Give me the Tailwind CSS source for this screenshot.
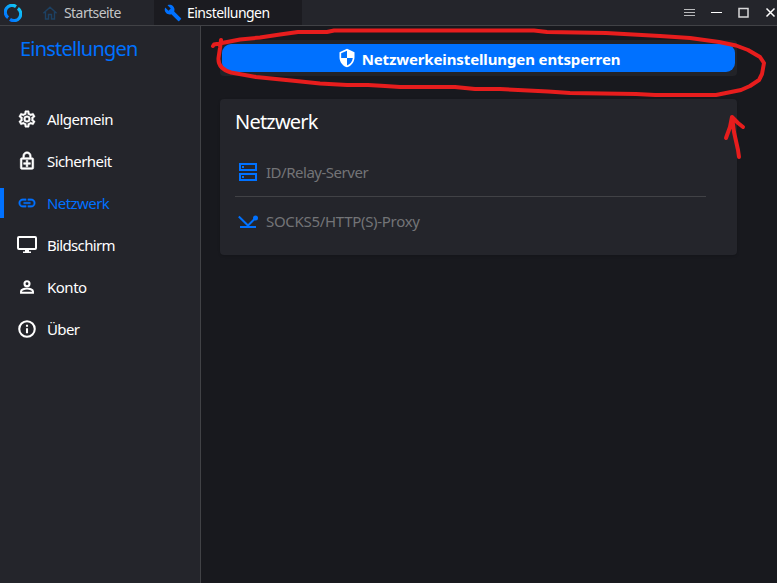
<!DOCTYPE html>
<html lang="de">
<head>
<meta charset="utf-8">
<title>Einstellungen</title>
<script src="https://cdn.jsdelivr.net/npm/@tailwindcss/browser@4"></script>
</head>
<body class="relative flex h-[583px] w-[777px] flex-col overflow-hidden bg-[#18191e] font-['Noto_Sans','Open_Sans',sans-serif] text-[15px] text-white">
  <header class="flex h-[26px] shrink-0 items-center border-b border-[#414246] bg-[#24252b]">
    <svg class="ml-1 h-[18px] w-[18px] shrink-0" viewBox="0 0 18 18" fill="none" stroke-width="3.200">
      <defs><linearGradient id="logo" x1="0" y1="1" x2="1" y2="0"><stop offset="0" stop-color="#0071ff"/><stop offset="1" stop-color="#12c9f5"/></linearGradient></defs>
      <path d="M4.100 13.600A6.600 6.600 0 0 1 12 2.600" stroke="url(#logo)"/>
      <path d="M13.900 4.400A6.600 6.600 0 0 1 6 15.400" stroke="url(#logo)"/>
    </svg>
    <div class="flex h-full w-[132px] items-center pl-[20px]">
      <svg class="h-4 w-4 shrink-0" viewBox="0 0 16 16" fill="none" stroke="#1d4163" stroke-width="1.4"><path d="M1.4 8.2 8 2.2l6.6 6M3.5 7v7h3V9.5h3V14h3V7"/></svg>
      <span class="ml-[6px] text-[14px] tracking-[-0.57px] text-[#c3c4c6]">Startseite</span>
    </div>
    <div class="flex h-full w-[148px] items-center bg-[#1b1b20] pl-[10px]">
      <svg class="h-[18px] w-[18px] shrink-0" viewBox="0 0 24 24" fill="#0071ff"><path d="M22.7 19l-9.1-9.1c.9-2.3.4-5-1.5-6.9-2-2-5-2.4-7.4-1.3L9 6 6 9 1.6 4.7C.4 7.1.9 10.1 2.900 12.100c1.900 1.900 4.600 2.400 6.900 1.500l9.100 9.100c.4.4 1 .4 1.400 0l2.300-2.300c.5-.4.5-1.100.1-1.400z"/></svg>
      <span class="ml-[5px] text-[14px] tracking-[-0.52px]">Einstellungen</span>
    </div>
    <div class="ml-auto flex h-full items-center">
      <svg class="h-[26px] w-[96px]" viewBox="681 0 96 26" fill="none">
        <path d="M684 9.500h11M684 12.500h11M684 15.500h11" stroke="#b9babc"/>
        <path d="M711 12.500h11" stroke="#fff"/>
        <path d="M739 8.500h9v8.500h-9z" stroke="#d8d8d9" stroke-width="1.500"/>
        <path d="M766.500 8.500l8 8M774.500 8.500l-8 8" stroke="#fff" stroke-width="1.500"/>
      </svg>
    </div>
  </header>

  <div class="flex min-h-0 flex-1">
    <aside class="flex w-[201px] shrink-0 flex-col border-r border-[#414246] bg-[#24252b]">
      <h1 class="h-[72px] pt-[8px] pl-[20px] text-[20px] leading-[30px] tracking-[-0.78px] text-[#0071ff]">Einstellungen</h1>
      <nav class="flex flex-col tracking-[-0.5px]">
        <a class="flex h-[42px] items-center pl-[17px]">
          <svg class="h-5 w-5" viewBox="0 0 24 24" fill="#fff"><path d="M19.43 12.98c.04-.32.07-.64.07-.98s-.03-.66-.07-.98l2.11-1.65c.19-.15.24-.42.12-.64l-2-3.460c-.12-.22-.39-.3-.61-.22l-2.490 1c-.52-.4-1.080-.73-1.690-.98l-.38-2.650C14.460 2.180 14.250 2 14 2h-4c-.25 0-.46.18-.49.42l-.38 2.650c-.61.25-1.170.59-1.690.98l-2.490-1c-.23-.09-.49 0-.61.22l-2 3.460c-.13.22-.07.49.12.64l2.110 1.650c-.04.32-.07.65-.07.98s.03.66.07.98l-2.110 1.650c-.19.15-.24.42-.12.64l2 3.460c.12.22.39.3.61.22l2.490-1c.52.4 1.080.73 1.690.98l.38 2.650c.03.24.24.42.49.42h4c.25 0 .46-.18.49-.42l.38-2.650c.61-.25 1.170-.59 1.690-.98l2.490 1c.23.09.49 0 .61-.22l2-3.460c.12-.22.07-.49-.12-.64l-2.110-1.650zM17.450 11.270c.04.31.05.52.05.73s-.02.43-.05.73l-.14 1.130.89.7 1.080.84-.7 1.210-1.270-.51-1.040-.42-.9.680c-.43.32-.84.56-1.250.73l-1.060.43-.16 1.130-.2 1.350h-1.400l-.19-1.350-.16-1.130-1.060-.43c-.43-.18-.83-.41-1.230-.71l-.91-.7-1.060.43-1.270.51-.7-1.210 1.080-.84.89-.7-.14-1.130c-.03-.31-.05-.54-.05-.74s.02-.43.05-.73l.14-1.130-.89-.7-1.080-.84.7-1.210 1.270.51 1.040.42.9-.68c.43-.32.84-.56 1.250-.73l1.060-.43.16-1.130.2-1.350h1.390l.19 1.350.16 1.130 1.060.43c.43.18.83.41 1.230.71l.91.7 1.060-.43 1.270-.51.7 1.210-1.070.85-.89.7.14 1.130zM12 8a4 4 0 1 0 0 8 4 4 0 0 0 0-8zm0 6a2 2 0 1 1 0-4 2 2 0 0 1 0 4z" stroke="#fff" stroke-width=".5"/></svg>
          <span class="ml-[10px]">Allgemein</span>
        </a>
        <a class="flex h-[42px] items-center pl-[17px]">
          <svg class="h-5 w-5" viewBox="0 0 24 24" fill="#fff"><path d="M18 8h-1V6A5 5 0 0 0 7 6v2H6a2 2 0 0 0-2 2v10c0 1.100.9 2 2 2h12a2 2 0 0 0 2-2V10a2 2 0 0 0-2-2zM8.900 6a3.100 3.100 0 0 1 6.200 0v2H8.900V6zM18 20H6V10h12v10zm-7-1h2v-3h3v-2h-3v-3h-2v3H8v2h3z" stroke="#fff" stroke-width=".7"/></svg>
          <span class="ml-[10px] tracking-[-0.57px]">Sicherheit</span>
        </a>
        <a class="relative flex h-[42px] items-center pl-[17px] text-[#0071ff]">
          <span class="absolute top-[6px] left-0 h-[30px] w-1 bg-[#0071ff]"></span>
          <svg class="h-5 w-5" viewBox="0 0 24 24" fill="#0071ff"><path d="M3.900 12A3.100 3.100 0 0 1 7 8.900h4V7H7a5 5 0 0 0 0 10h4v-1.900H7A3.100 3.100 0 0 1 3.900 12zM8 13h8v-2H8v2zm9-6h-4v1.900h4a3.100 3.100 0 0 1 0 6.200h-4V17h4a5 5 0 0 0 0-10z" stroke="#0071ff" stroke-width=".4"/></svg>
          <span class="ml-[10px] tracking-[-0.57px]">Netzwerk</span>
        </a>
        <a class="flex h-[42px] items-center pl-[17px]">
          <svg class="h-5 w-5" viewBox="0 0 20 20" fill="none" stroke="#fff" stroke-width="2"><path d="M2 2h16a1 1 0 0 1 1 1v10a1 1 0 0 1-1 1H2a1 1 0 0 1-1-1V3a1 1 0 0 1 1-1z"/><path d="M8 14.500h4V16.500h2V18H6v-1.500h2z" fill="#fff" stroke="none"/></svg>
          <span class="ml-[10px] tracking-[-0.66px]">Bildschirm</span>
        </a>
        <a class="flex h-[42px] items-center pl-[17px]">
          <svg class="h-5 w-5" viewBox="0 0 24 24" fill="none" stroke="#fff" stroke-width="2.500"><circle cx="12" cy="8" r="3"/><path d="M4.900 18.900V17c0-2 4.500-3.200 7.100-3.200s7.100 1.200 7.100 3.200v1.900z"/></svg>
          <span class="ml-[10px]">Konto</span>
        </a>
        <a class="flex h-[42px] items-center pl-[17px]">
          <svg class="h-5 w-5" viewBox="0 0 24 24" fill="none" stroke="#fff" stroke-width="2.500"><circle cx="12" cy="12" r="9.300"/><path d="M12 7v2.200M12 11v6"/></svg>
          <span class="ml-[10px] tracking-[-0.6px]">Über</span>
        </a>
      </nav>
    </aside>

    <main class="flex flex-1 flex-col pt-[14px] pl-[19px]">
      <div class="h-[36px] w-[517px] rounded-[4px] bg-[#222328] px-[2px] py-1">
        <button class="flex h-[28px] w-full items-center justify-center rounded-[9px] bg-[#0071ff] text-[15px] font-bold">
          <svg class="h-5 w-5 shrink-0" viewBox="0 0 24 24" fill="#fff"><path d="M12 1 3 5v6c0 5.550 3.840 10.740 9 12 5.160-1.260 9-6.450 9-12V5l-9-4zm0 10.990h7c-.53 4.120-3.280 7.790-7 8.940V12H5V6.300l7-3.110v8.800z"/></svg>
          <span class="ml-[5px] pt-[2px] tracking-[-0.12px]">Netzwerkeinstellungen entsperren</span>
        </button>
      </div>
      <section class="mt-[23px] flex h-[156px] w-[517px] flex-col rounded-[4px] bg-[#24252b] pr-[31px] pl-[15px] shadow-sm">
        <h2 class="h-[49px] pt-[8px] text-[20px] leading-[30px] tracking-[-0.8px]">Netzwerk</h2>
        <div class="flex h-[49px] items-center border-b border-[#414246] pl-[3px] text-[#737477]">
          <svg class="h-5 w-5" viewBox="0 0 20 20" fill="none" stroke="#0071ff" stroke-width="2"><path d="M2 2h16v6H2zM2 12h16v6H2z"/><path d="M4 5h2M4 15h2"/></svg>
          <span class="ml-[8px] tracking-[-0.48px]">ID/Relay-Server</span>
        </div>
        <div class="flex h-[49px] items-center pl-[3px] text-[#737477]">
          <svg class="h-5 w-5" viewBox="0 0 20 20" fill="none" stroke="#0071ff" stroke-width="2"><path d="M.8 4.500 10 13.500l7-7M2 15h16"/><circle cx="17.500" cy="6" r="2.500" fill="#0071ff" stroke="none"/></svg>
          <span class="ml-[8px] tracking-[-0.3px]">SOCKS5/HTTP(S)-Proxy</span>
        </div>
      </section>
    </main>
  </div>

  <svg class="pointer-events-none absolute inset-0 h-[583px] w-[777px]" viewBox="0 0 777 583" fill="none" stroke="#e71d1d" stroke-width="4" stroke-linecap="round" stroke-linejoin="round">
    <path d="M213 46 214 44.500 222 43 240 39.500 260 37.500 280 34.500 298 32 327 32 334 30.500H534L547 32 606 33 660 36 690 38 719 42 736 45.500 748 50 760 57 764 63 762 74 759 80 750 86 741 90 716 95H655L636 94 570 93 548 91.500 500 89H475L455 87H400L385 86 368 85H347L320 83.500 296 81 256 77 231 72.500C223 70 218 65 218.500 58L220 48 221 40"/>
    <path d="M726 138 730 127 732 117 738 123 743 127M732 117 734 132 738 150 739 157"/>
  </svg>
</body>
</html>
